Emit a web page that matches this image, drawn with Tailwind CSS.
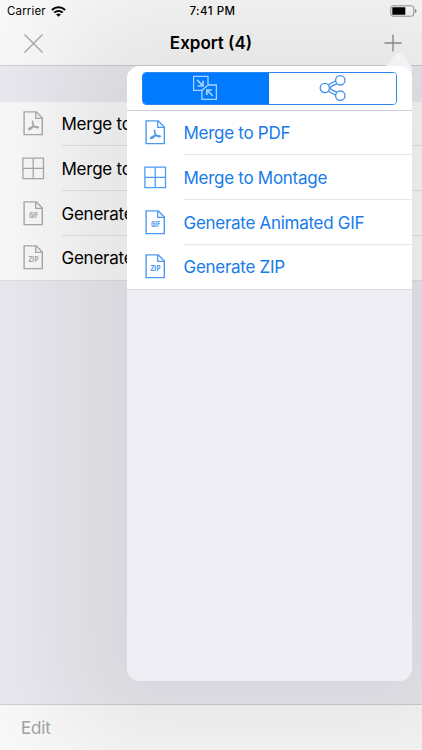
<!DOCTYPE html>
<html lang="en">
<head>
<meta charset="utf-8">
<title>Export</title>
<script src="https://cdn.jsdelivr.net/npm/@tailwindcss/browser@4"></script>
</head>
<body class="bg-[#eae9ef]">
<svg class="hidden">
  <defs>
    <g id="page" fill="none" stroke="currentColor" stroke-width="1.4">
      <path d="M3.1 .9H15.3L21.3 7.1V23.6H3.1Z"/>
      <path d="M14.7 1V7.3H21.3" stroke-width="1.3"/>
    </g>
    <symbol id="pdf" viewBox="0 0 24 25">
      <use href="#page"/>
      <path d="M11.6 10.4C11.2 12.4 12.8 13.8 11.9 15.6C11 17.4 8.8 18.6 7.7 18.4C7.4 17.2 10.5 16 12.6 15.8C14.6 15.6 17.4 15.7 17.2 16.5C15.6 17.3 13 15.4 12.2 14" fill="none" stroke="currentColor" stroke-width="1.6" stroke-linecap="round"/>
    </symbol>
    <symbol id="grid" viewBox="0 0 24 25">
      <path d="M1.9 2.1H22.5V22.7H1.9ZM12.2 2.1V22.7M1.9 12.4H22.5" fill="none" stroke="currentColor" stroke-width="1.3"/>
    </symbol>
    <symbol id="gif" viewBox="0 0 24 25">
      <use href="#page"/>
      <text x="12.3" y="17.2" text-anchor="middle" textLength="8.8" lengthAdjust="spacingAndGlyphs" font-size="8" font-weight="700" font-family="Open Sans, sans-serif" fill="currentColor">GIF</text>
    </symbol>
    <symbol id="zip" viewBox="0 0 24 25">
      <use href="#page"/>
      <text x="12.3" y="17.2" text-anchor="middle" textLength="9.8" lengthAdjust="spacingAndGlyphs" font-size="8" font-weight="700" font-family="Open Sans, sans-serif" fill="currentColor">ZIP</text>
    </symbol>
  </defs>
</svg>
<div class="relative flex h-[750px] w-[422px] flex-col overflow-hidden bg-[#eae9ef] font-['Inter',sans-serif] text-black">
  <header class="h-[66px] shrink-0 border-b border-[#cfced3] bg-[#f9f9f9]"></header>
  <div class="h-[35.5px] shrink-0"></div>
  <ul class="flex shrink-0 flex-col border-b border-[#dfdfe3] bg-[#f9f9f9] text-[17px] tracking-[-0.25px]">
    <li class="flex h-[44.75px] items-center pl-[21px]"><svg class="h-[25px] w-6 text-[#a9a9a9]"><use href="#pdf"/></svg><span class="ml-[16.5px] flex h-full flex-1 items-center whitespace-nowrap border-b border-[#e2e2e4] pt-[3px]">Merge to PDF</span></li>
    <li class="flex h-[44.75px] items-center pl-[21px]"><svg class="h-[25px] w-6 text-[#a9a9a9]"><use href="#grid"/></svg><span class="ml-[16.5px] flex h-full flex-1 items-center whitespace-nowrap border-b border-[#e2e2e4] pt-[3px]">Merge to Montage</span></li>
    <li class="flex h-[44.75px] items-center pl-[21px]"><svg class="h-[25px] w-6 text-[#a9a9a9]"><use href="#gif"/></svg><span class="ml-[16.5px] flex h-full flex-1 items-center whitespace-nowrap border-b border-[#e2e2e4] pt-[3px]">Generate Animated GIF</span></li>
    <li class="flex h-[43.75px] items-center pl-[21px]"><svg class="h-[25px] w-6 text-[#a9a9a9]"><use href="#zip"/></svg><span class="ml-[16.5px] flex h-full flex-1 items-center whitespace-nowrap pt-[2px]">Generate ZIP</span></li>
  </ul>
  <div class="flex-1"></div>
  <footer class="flex h-[46px] shrink-0 items-center border-t border-[#cfcfd4] bg-[#f9f9f9] pl-[21px] pt-[2px] text-[17px] tracking-[-0.2px] text-[#a3a3a3]">Edit</footer>

  <!-- popover -->
  <section class="absolute left-[126.5px] top-[65.5px] h-[615px] w-[285px] rounded-[13px] shadow-[0_0_110px_70px_rgba(0,0,0,0.08)]">
    <svg class="absolute -top-[14px] right-0 h-[34px] w-[28px]" viewBox="0 0 28 34"><path d="M0 15C5 12 8 7 11 3C13 0 17 0 19 3C22 7 25 12 28 15V34H0Z" fill="#f2f2f4"/></svg>
    <div class="relative flex h-full flex-col overflow-hidden rounded-[13px] bg-[#efeef4]">
      <div class="h-[45px] shrink-0 border-b border-[#cfcfd3] bg-white pl-[15px] pr-[15px] pt-[6px]">
        <div class="flex h-[33px] overflow-hidden rounded-[4px] border border-[#2b87f0]">
          <div class="flex flex-1 items-center justify-center bg-[#007aff] pr-[1.5px] text-[#a9d2ff]">
            <svg class="h-[26px] w-[26px]" viewBox="0 0 26 26" fill="none" stroke="currentColor" stroke-width="1.3"><path d="M9.5 15.4H1.6V1.4H16V10H24.4V24.4H9.9V15.4L16 10"/><path d="M5.2 4.8L10.6 10.6M11 5.8V11H5.6M20.8 21L15 15.2M14.8 20V15H20" stroke-width="1.7"/></svg>
          </div>
          <div class="flex flex-1 items-center justify-center bg-white pl-[2px] text-[#3b8ff0]">
            <svg class="h-[28px] w-[28px]" viewBox="0 0 28 28" fill="none" stroke="currentColor" stroke-width="1.3"><circle cx="5.8" cy="14" r="4.6"/><circle cx="21.3" cy="6.3" r="4.7"/><circle cx="21.3" cy="21.7" r="4.7"/><path d="M9.1 10.8L16.8 6.7M10.3 13.6L17.9 9.6M10.3 14.4L17.9 18.4M9.1 17.2L16.8 21.3"/></svg>
          </div>
        </div>
      </div>
      <ul class="flex shrink-0 flex-col border-b border-[#dedde3] bg-white text-[17px] tracking-[-0.28px] text-[#177bea]">
        <li class="flex h-[44.75px] items-center pl-4"><svg class="h-[25px] w-6 text-[#4d9af2]"><use href="#pdf"/></svg><span class="ml-[17px] flex h-full flex-1 items-center whitespace-nowrap border-b border-[#e6e6e9] pt-[2px]">Merge to PDF</span></li>
        <li class="flex h-[44.75px] items-center pl-4"><svg class="h-[25px] w-6 text-[#4d9af2]"><use href="#grid"/></svg><span class="ml-[17px] flex h-full flex-1 items-center whitespace-nowrap border-b border-[#e6e6e9] pt-[3px]">Merge to Montage</span></li>
        <li class="flex h-[44.75px] items-center pl-4"><svg class="h-[25px] w-6 text-[#4d9af2]"><use href="#gif"/></svg><span class="ml-[17px] flex h-full flex-1 items-center whitespace-nowrap border-b border-[#e6e6e9] pt-[3px]">Generate Animated GIF</span></li>
        <li class="flex h-[43.75px] items-center pl-4"><svg class="h-[25px] w-6 text-[#4d9af2]"><use href="#zip"/></svg><span class="ml-[17px] flex h-full flex-1 items-center whitespace-nowrap pt-[2px]">Generate ZIP</span></li>
      </ul>
    </div>
  </section>

  <!-- status and title, above the popover shadow -->
  <div class="absolute inset-x-0 top-0">
    <div class="grid h-[22px] grid-cols-3 items-center pl-[7px] pr-[5px] text-[11.5px]">
      <div class="flex items-center gap-[5px]"><span class="pt-px tracking-[0.15px]">Carrier</span>
        <svg class="h-[11px] w-[15px]" viewBox="0 0 15 11" fill="none" stroke="#000" stroke-width="2"><path d="M.9 4C4.6 .3 10.4 .3 14.1 4"/><path d="M3.3 6.6C5.7 4.3 9.3 4.3 11.7 6.6"/><path d="M7.5 10.8L5.2 8.4C6.5 7.2 8.5 7.2 9.8 8.4Z" fill="#000" stroke="none"/></svg>
      </div>
      <div class="pl-px pt-px text-center font-medium tracking-[0.5px]">7:41 PM</div>
      <div class="flex justify-end"><svg class="h-3 w-[27px]" viewBox="0 0 27 12"><rect x=".8" y=".8" width="23" height="10.4" rx="2.3" fill="none" stroke="#8b8b8b"/><rect x="2.3" y="2.2" width="13" height="7.6" rx=".6"/><path d="M25 4V8C27 7.4 27 4.6 25 4Z" fill="#8b8b8b"/></svg></div>
    </div>
    <div class="flex h-[42px] items-center justify-between pl-6 pr-5">
      <svg class="h-[19px] w-[19px]" viewBox="0 0 19 19" stroke="#a6a6a6" stroke-width="1.4"><path d="M.5 .5L18.5 18.5M18.5 .5L.5 18.5"/></svg>
      <h1 class="relative -left-[2.5px] top-[0.5px] text-[17px] font-semibold">Export (4)</h1>
      <svg class="h-[18px] w-[18px]" viewBox="0 0 18 18" stroke="#898989" stroke-width="1.4"><path d="M9 .4V17.6M.4 9H17.6"/></svg>
    </div>
  </div>
</div>
</body>
</html>
